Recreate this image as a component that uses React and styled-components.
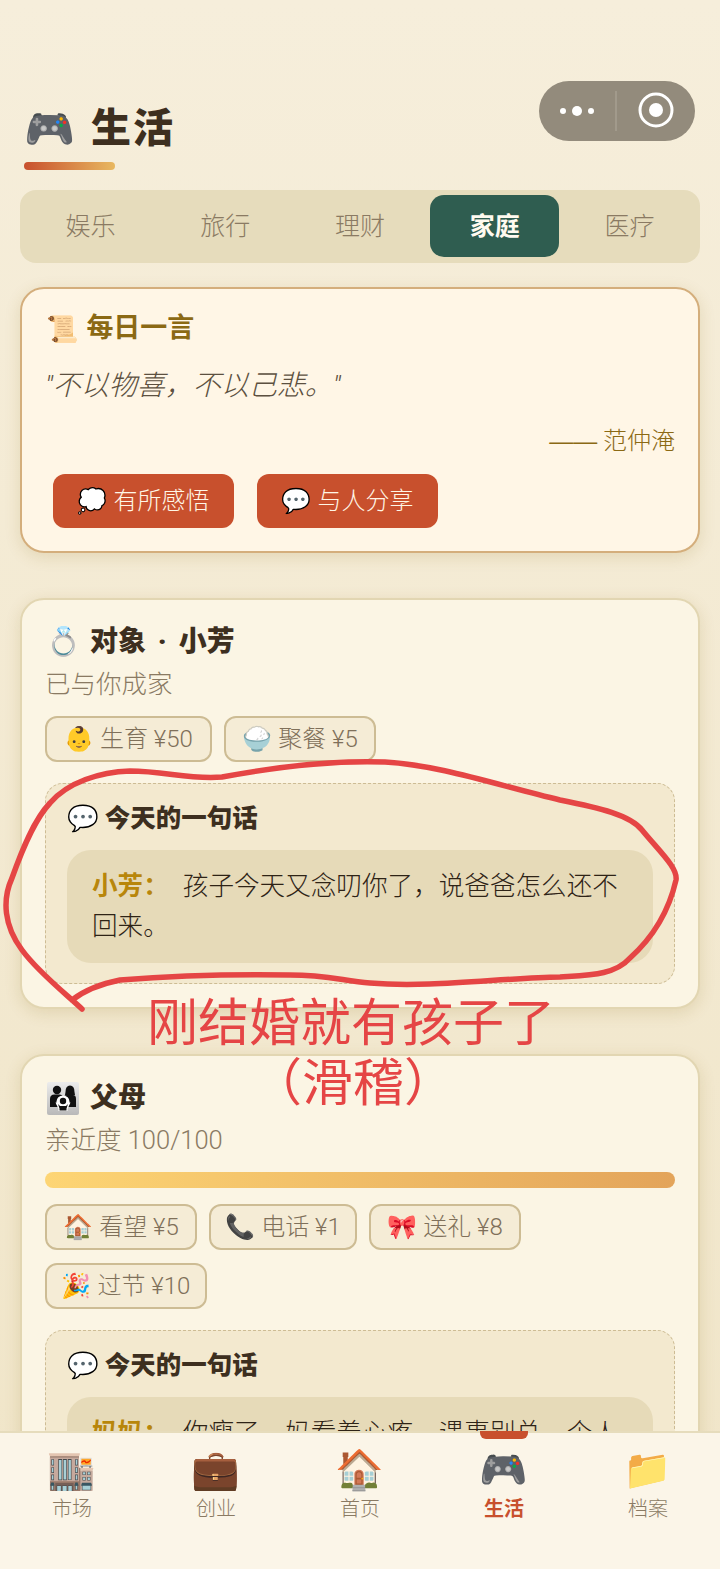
import React from 'react'
import styled, { createGlobalStyle } from 'styled-components'

const GlobalStyle = createGlobalStyle`
  html, body { margin: 0; padding: 0; }
  body {
    font-family: Roboto, "Noto Sans CJK SC", "Noto Sans", sans-serif;
    line-height: 1.4;
    color: #3d2f1f;
  }
  * { box-sizing: border-box; }
`

const Page = styled.div`
  position: relative;
  width: 720px;
  height: 1569px;
  overflow: hidden;
  display: flex;
  flex-direction: column;
  background: linear-gradient(180deg, #f6eedb 0%, #f0e5c8 100%);
`
const Scroll = styled.div`
  flex: 1;
  min-height: 0;
  overflow: hidden;
  padding: 0 20px;
`
const Header = styled.div`
  padding: 102px 4px 0;
`
const Title = styled.h1`
  margin: 0;
  display: flex;
  align-items: center;
  gap: 16px;
  height: 54px;
  font-size: 40px;
  font-weight: 900;
  letter-spacing: 2px;
  line-height: 54px;
`
const Emoji = styled.span`
  font-family: "Noto Color Emoji", sans-serif;
  font-style: normal;
  font-weight: 400;
  letter-spacing: 0;
`
const TitleIcon = styled(Emoji)`
  font-size: 41px;
`
const TitleBar = styled.div`
  width: 91px;
  height: 8px;
  margin-top: 6px;
  border-radius: 4px;
  background: linear-gradient(90deg, #c8502d, #e8b860);
`
const Tabs = styled.div`
  display: grid;
  grid-template-columns: repeat(5, 1fr);
  gap: 6px;
  height: 73px;
  margin-top: 20px;
  padding: 5px 6px 6px;
  border-radius: 16px;
  background: #e6dcbc;
`
const Tab = styled.div`
  display: flex;
  align-items: center;
  justify-content: center;
  border-radius: 14px;
  font-size: 25px;
  font-weight: ${p => (p.$active ? 700 : 300)};
  color: ${p => (p.$active ? '#fffaf0' : '#8a7a63')};
  background: ${p => (p.$active ? '#2f5d50' : 'transparent')};
`
const Card = styled.section`
  margin-top: ${p => p.$top}px;
  padding: 22px 23px 23px;
  border-radius: 24px;
  border: 2px solid ${p => (p.$quote ? '#d4ae7c' : '#e2d6b2')};
  background: ${p => (p.$quote ? '#fff6e6' : '#fbf5e4')};
  box-shadow: 0 4px 16px rgba(139, 105, 20, 0.16);
`
const QuoteHead = styled.div`
  display: flex;
  align-items: center;
  gap: 8px;
  height: 36px;
  padding-left: 1px;
  font-size: 27px;
  font-weight: 700;
  color: #8b6914;
`
const QuoteIcon = styled(Emoji)`
  font-size: 26px;
`
const QuoteText = styled.div`
  margin-top: 19px;
  font-size: 28px;
  font-style: italic;
  font-weight: 300;
  line-height: 40px;
  color: #5c5040;
`
const QuoteAuthor = styled.div`
  margin-top: 16px;
  padding-top: 1px;
  text-align: right;
  font-size: 24px;
  font-weight: 300;
  line-height: 36px;
  color: #8b6914;
`
const Dash = styled.span`
  font-family: "Liberation Sans", sans-serif;
`
const ActionRow = styled.div`
  display: flex;
  gap: 23px;
  margin-top: 15px;
  padding-left: 8px;
`
const ActionButton = styled.div`
  display: flex;
  align-items: center;
  justify-content: center;
  gap: 6px;
  width: 181px;
  height: 54px;
  padding-top: 2px;
  border-radius: 12px;
  background: #c8502d;
  color: #fff6e6;
  font-size: 24px;
  font-weight: 300;
`
const Name = styled.div`
  display: flex;
  align-items: center;
  gap: 9px;
  height: 40px;
  padding-left: 1px;
  font-size: 28px;
  font-weight: 900;
  word-spacing: 5px;
`
const Status = styled.div`
  margin-top: 4px;
  font-size: 25.5px;
  font-weight: 300;
  line-height: 36px;
  color: #8a7a63;
`
const Meter = styled.div`
  height: 16px;
  margin-top: 14px;
  border-radius: 8px;
  background: linear-gradient(90deg, #fdd574, #e3a45a);
`
const Chips = styled.div`
  display: flex;
  flex-wrap: wrap;
  gap: 13px 12px;
  margin-top: ${p => p.$top}px;
`
const Chip = styled.div`
  display: flex;
  align-items: center;
  justify-content: center;
  gap: 6px;
  width: ${p => p.$width}px;
  height: 46px;
  padding-top: 2px;
  border-radius: 12px;
  border: 2px solid #cdbc94;
  background: #f5ecd6;
  font-size: 24px;
  font-weight: 300;
  color: #7f705a;
`
const Dialog = styled.div`
  margin-top: 21px;
  padding: 15px 21px 20px;
  border-radius: 18px;
  border: 1px dashed #cdbc94;
  background: #f3e9cf;
`
const DialogHead = styled.div`
  display: flex;
  align-items: center;
  gap: 6px;
  height: 38px;
  padding-top: 2px;
  font-size: 25.5px;
  font-weight: 900;
`
const Bubble = styled.div`
  margin-top: 13px;
  padding: 16px 25px 17px;
  border-radius: 24px;
  background: #e6dab8;
  font-size: 25.6px;
  font-weight: 300;
  line-height: 40px;
  color: #2e2316;
`
const Speaker = styled.b`
  margin-right: 14px;
  font-weight: 700;
  color: #b8860b;
`
const Nav = styled.nav`
  position: relative;
  display: grid;
  grid-template-columns: repeat(5, 1fr);
  height: 138px;
  padding-top: 12px;
  background: #fbf5e8;
  border-top: 2px solid #e6dcbc;
`
const NavItem = styled.div`
  position: relative;
  display: flex;
  flex-direction: column;
  align-items: center;
  color: ${p => (p.$active ? '#c8502d' : '#8a7a63')};
  font-size: 20px;
  line-height: 28px;
  font-weight: ${p => (p.$active ? 700 : 300)};
`
const NavIcon = styled(Emoji)`
  font-size: 39px;
  line-height: 50px;
`
const NavMark = styled.span`
  position: absolute;
  top: -14px;
  width: 48px;
  height: 8px;
  border-radius: 0 0 6px 6px;
  background: #c8502d;
`
const Capsule = styled.div`
  position: absolute;
  top: 81px;
  left: 539px;
  display: flex;
  align-items: center;
  width: 156px;
  height: 60px;
  border-radius: 30px;
  background: #938b7c;
`
const Marks = styled.svg`
  position: absolute;
  inset: 0;
  pointer-events: none;
`
const Remark = styled.div`
  position: absolute;
  top: ${p => p.$top}px;
  left: ${p => p.$left}px;
  font-size: 51px;
  font-weight: 400;
  line-height: 60px;
  color: #e54545;
  white-space: nowrap;
`
const FamilySvg = styled.svg`
  margin: 0 2px 0 1px;
`

const tabs = ['娱乐', '旅行', '理财', '家庭', '医疗']
const navs = [
  ['🏬', '市场'],
  ['💼', '创业'],
  ['🏠', '首页'],
  ['🎮', '生活', true],
  ['📁', '档案'],
]
const spouseChips = [
  ['👶', '生育 ¥50', 167],
  ['🍚', '聚餐 ¥5', 152],
]
const parentChips = [
  ['🏠', '看望 ¥5', 152],
  ['📞', '电话 ¥1', 148],
  ['🎀', '送礼 ¥8', 152],
  ['🎉', '过节 ¥10', 162],
]

// the family emoji shows as a grey tile with black figures, the colour font has no such glyph
function FamilyIcon() {
  return (
    <FamilySvg width="32" height="33" viewBox="0 0 32 33">
      <defs>
        <linearGradient id="tile" x1="0" y1="0" x2="0" y2="1">
          <stop offset="0" stopColor="#ececec" />
          <stop offset="1" stopColor="#b9b9b9" />
        </linearGradient>
      </defs>
      <rect width="32" height="33" rx="2" fill="url(#tile)" />
      <circle cx="10" cy="8" r="4.2" fill="#111" />
      <path d="M3 25 V17 Q3 12.5 7.5 12.5 H12.5 Q15.5 12.5 16 15 L16 25 Z" fill="#111" />
      <path d="M18.5 10 Q18.5 3.5 23 3.5 Q27.5 3.5 27.5 10 L28 13 H18 Z" fill="#111" />
      <path d="M16 25 V17 Q16.5 13 20 13 H26 Q29 13 29 17 V25 Z" fill="#111" />
      <circle cx="16" cy="20" r="6.6" fill="#fff" />
      <circle cx="16" cy="19" r="3.2" fill="#111" />
      <path d="M8.5 20.5 H11.5 L13 23 H19 L20.5 20.5 H23.5 L20.5 27 V29 H11.5 V27 Z" fill="#fff" />
      <path d="M11 22 L13 24 H19 L21 22 L19.5 26.5 V28.5 H12.5 V26.5 Z" fill="#111" />
    </FamilySvg>
  )
}

export default function App() {
  return (
    <Page>
      <GlobalStyle />
      <Scroll>
        <Header>
          <Title><TitleIcon>🎮</TitleIcon>生活</Title>
          <TitleBar />
        </Header>
        <Tabs>
          {tabs.map(t => <Tab key={t} $active={t === '家庭'}>{t}</Tab>)}
        </Tabs>

        <Card $quote $top={24}>
          <QuoteHead><QuoteIcon>📜</QuoteIcon>每日一言</QuoteHead>
          <QuoteText>"不以物喜，不以己悲。"</QuoteText>
          <QuoteAuthor><Dash>——</Dash> 范仲淹</QuoteAuthor>
          <ActionRow>
            <ActionButton><Emoji>💭</Emoji>有所感悟</ActionButton>
            <ActionButton><Emoji>💬</Emoji>与人分享</ActionButton>
          </ActionRow>
        </Card>

        <Card $top={45}>
          <Name><Emoji>💍</Emoji>对象 · 小芳</Name>
          <Status>已与你成家</Status>
          <Chips $top={14}>
            {spouseChips.map(([icon, label, width]) => (
              <Chip key={label} $width={width}><Emoji>{icon}</Emoji>{label}</Chip>
            ))}
          </Chips>
          <Dialog>
            <DialogHead><Emoji>💬</Emoji>今天的一句话</DialogHead>
            <Bubble><Speaker>小芳：</Speaker>孩子今天又念叨你了，说爸爸怎么还不回来。</Bubble>
          </Dialog>
        </Card>

        <Card $top={45}>
          <Name><FamilyIcon />父母</Name>
          <Status>亲近度 100/100</Status>
          <Meter />
          <Chips $top={16}>
            {parentChips.map(([icon, label, width]) => (
              <Chip key={label} $width={width}><Emoji>{icon}</Emoji>{label}</Chip>
            ))}
          </Chips>
          <Dialog>
            <DialogHead><Emoji>💬</Emoji>今天的一句话</DialogHead>
            <Bubble><Speaker>妈妈：</Speaker>你瘦了，妈看着心疼，遇事别总一个人扛着。</Bubble>
          </Dialog>
        </Card>
      </Scroll>

      <Nav>
        {navs.map(([icon, label, active]) => (
          <NavItem key={label} $active={active}>
            {active && <NavMark />}
            <NavIcon>{icon}</NavIcon>
            {label}
          </NavItem>
        ))}
      </Nav>

      <Capsule>
        <svg width="156" height="60" viewBox="0 0 156 60">
          <circle cx="24" cy="30" r="3" fill="#fff" />
          <circle cx="38" cy="30" r="5" fill="#fff" />
          <circle cx="52" cy="30" r="3" fill="#fff" />
          <line x1="77" y1="10" x2="77" y2="50" stroke="#b0a99b" strokeWidth="1" />
          <circle cx="117" cy="29" r="16" fill="none" stroke="#fff" strokeWidth="3" />
          <circle cx="117" cy="29" r="7" fill="#fff" />
        </svg>
      </Capsule>

      <Marks width="720" height="1569" viewBox="0 0 720 1569">
        <path
          d="M82 1009 C66 994 38 972 22 950 C4 926 2 900 12 878 C22 850 34 820 50 803 C68 782 100 772 130 771 C165 771 190 780 222 777 C270 768 330 760 385 762 C440 765 500 786 560 800 C600 808 630 815 642 830 C660 852 678 868 676 880 C668 915 650 940 630 958 C615 975 590 975 560 977 C500 978 430 988 370 983 C340 980 325 975 290 975 C230 974 170 976 120 980 C100 984 85 990 72 1000"
          fill="none"
          stroke="#e54545"
          strokeWidth="5.5"
          strokeLinecap="round"
          strokeLinejoin="round"
        />
      </Marks>
      <Remark $top={994} $left={147}>刚结婚就有孩子了</Remark>
      <Remark $top={1054} $left={251}>（滑稽）</Remark>
    </Page>
  )
}
